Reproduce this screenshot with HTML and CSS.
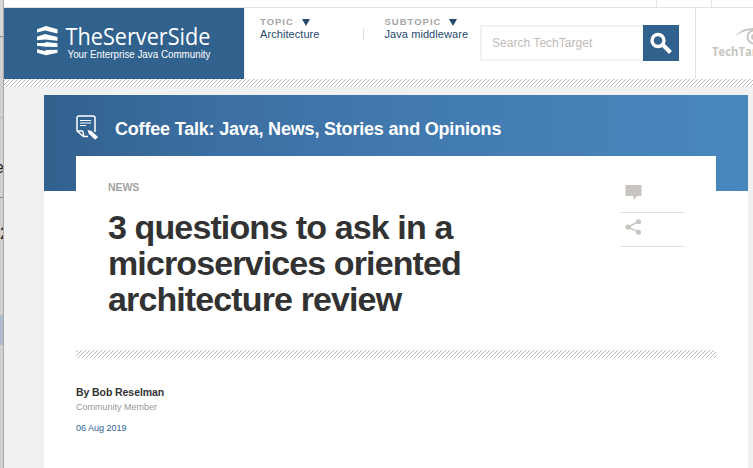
FILE: index.html
```html
<!DOCTYPE html>
<html lang="en">
<head>
<meta charset="utf-8">
<title>3 questions to ask in a microservices oriented architecture review</title>
<link rel="stylesheet" href="styles.css">
</head>
<body>
<aside class="edge">
  <div class="edge-head"></div>
  <div class="edge-row row-a"></div>
  <div class="edge-row row-b"></div>
  <div class="edge-row row-c"><span>e</span></div>
  <div class="edge-row row-d"><span>2</span></div>
  <div class="edge-selected"></div>
</aside>
<div class="page">
  <div class="topbar"><div class="topbar-cell"></div></div>
  <header class="header">
    <a class="brand">
      <svg width="240" height="71" viewBox="4 8 240 71">
        <g fill="#fff">
          <path d="M37 29.2l9-3.2 11.500 3.200v4.300L45 30.600l-8 1.900z"/>
          <path d="M37 36.700l8-2.700 12.500 3v3.700L45 39.600l-8 .6z"/>
          <path d="M37 43l8 0 .5-1 12 1.300v3.600L46 46.800l-9-1z"/>
          <path d="M37 49.200l8 1.800 1-1 11.500-.2v2.900L46 55.300l-9-2.600z"/>
        </g>
        <text class="brand-name" x="65.500" y="44.500" textLength="145" lengthAdjust="spacingAndGlyphs">TheServerSide</text>
        <text class="brand-tag" x="67.500" y="57.800" textLength="143" lengthAdjust="spacingAndGlyphs">Your Enterprise Java Community</text>
      </svg>
    </a>
    <nav class="topics">
      <div class="topic"><div class="topic-label">TOPIC<i class="caret"></i></div><a>Architecture</a></div>
      <div class="divider"></div>
      <div class="topic"><div class="topic-label">SUBTOPIC<i class="caret"></i></div><a>Java middleware</a></div>
    </nav>
    <form class="search">
      <div class="field">Search TechTarget</div>
      <div class="search-btn">
        <svg width="36" height="36" viewBox="0 0 36 36" fill="none" stroke="#fff"><circle cx="15" cy="15.500" r="6" stroke-width="3.400"/><path d="M19.500 19.500l8 8" stroke-width="4"/></svg>
      </div>
    </form>
    <div class="network">
      <svg width="57" height="71" viewBox="696 8 57 71">
        <path d="M736 36c3-5 9-8 18-8v2c-7 0-12 1.500-18 6z" fill="#c8c4c0"/>
        <circle cx="754" cy="37" r="6.500" fill="none" stroke="#c8c4c0" stroke-width="2"/>
        <circle cx="754" cy="37" r="3" fill="#c8c4c0"/>
        <text class="network-name" x="712" y="55.500" textLength="63" lengthAdjust="spacingAndGlyphs">TechTarget</text>
      </svg>
    </div>
  </header>
  <div class="hatch"></div>
  <main class="article">
    <div class="hero">
      <div class="channel">
        <svg width="24" height="26" viewBox="0 0 24 26" fill="none" stroke="#fff" stroke-width="1.500">
          <path d="M12 21.500H7.500L1 16V3Q1 1 3 1H17Q19 1 19 3V17"/>
          <path d="M1.500 16H6Q7.500 16 7.500 21"/>
          <path d="M4 5.500H15M4 8H15M4 10.500H10" stroke-width="1.200"/>
          <path d="M11.500 15l4 1 6.500 6-2.800 2.800-6.400-6z" fill="#fff" stroke="none"/>
        </svg>
        <span>Coffee Talk: Java, News, Stories and Opinions</span>
      </div>
    </div>
    <section class="card">
      <div class="card-main">
        <div class="headline">
          <div class="kicker">NEWS</div>
          <h1>3 questions to ask in a<br>microservices oriented<br>architecture review</h1>
        </div>
        <div class="actions">
          <a><svg width="17" height="16" viewBox="0 0 17 16"><path d="M.5 0h16v11h-4L8.500 15v-4h-8z" fill="#c8c4c0"/></svg></a>
          <a class="share"><svg width="17" height="16" viewBox="0 0 17 16" fill="#c8c4c0"><path d="M13.500 2.500L3 8l10.500 5.200" fill="none" stroke="#c8c4c0" stroke-width="1.500"/><circle cx="3" cy="8" r="2.600"/><circle cx="13.500" cy="2.700" r="2.500"/><circle cx="13.500" cy="13.200" r="2.500"/></svg></a>
        </div>
      </div>
      <div class="hatch"></div>
      <div class="byline">
        <div class="author">By Bob Reselman</div>
        <div class="role">Community Member</div>
        <div class="date">06 Aug 2019</div>
      </div>
    </section>
  </main>
</div>
</body>
</html>
```
FILE: styles.css
```css
* { box-sizing: border-box; }
body {
  margin: 0;
  height: 468px;
  display: flex;
  overflow: hidden;
  background: #f1f1f1;
  font-family: "Liberation Sans", Arial, sans-serif;
}
.edge {
  width: 4px;
  flex: none;
  overflow: hidden;
  background: #d0d0d0;
  border-right: 1px solid #a9a9a9;
  font-size: 16px;
  color: #222;
}
.edge-head { height: 37px; border-bottom: 1px solid #888; background: #d7d7d7; }
.edge-row { border-bottom: 1px solid #b9b9b9; }
.edge-row span { display: block; width: 10px; }
.row-a { height: 81px; }
.row-b { height: 19px; border-color: #c6c6c6; }
.row-c { height: 61px; padding-top: 22px; border-color: #888; }
.row-c span { margin-left: -5px; }
.row-d { height: 117px; padding-top: 27px; border: 0; }
.row-d span { margin-left: 0; }
.edge-selected { height: 30px; background: #aebbd0; }

.page { flex: 1; min-width: 0; display: flex; flex-direction: column; }
.topbar {
  height: 8px;
  flex: none;
  padding-left: 652px;
  background: #fff;
  border-bottom: 1px solid #e2e2e2;
}
.topbar-cell { width: 56px; height: 7px; border: solid #e2e2e2; border-width: 0 1px; }
.header { height: 71px; flex: none; display: flex; background: #fff; }
.brand { width: 240px; height: 71px; flex: none; background: #31618d; }
svg { display: block; }
.brand-name { font: 400 23px "Open Sans", sans-serif; fill: #fff; }
.brand-tag { font: 10px "Liberation Sans", Arial, sans-serif; fill: #fff; }
.topics {
  width: 236px;
  flex: none;
  display: flex;
  padding: 8px 0 0 16px;
  border-left: 1px solid #eee;
}
.topic {
  margin-left: -1px;
  font-size: 11px;
  line-height: 12px;
  letter-spacing: .07px;
  color: #264a6e;
  white-space: nowrap;
}
.topic-label {
  display: flex;
  align-items: center;
  height: 12px;
  font-size: 9.5px;
  font-weight: bold;
  letter-spacing: 1px;
  color: #a5a5a5;
}
.caret {
  margin-left: 8px;
  border: solid transparent;
  border-width: 7px 4.5px 0;
  border-top-color: #264a6e;
}
.divider { width: 1px; height: 12px; margin: 12px 22px 0 43px; background: #ddd; }
.search { width: 215px; flex: none; display: flex; padding-top: 17px; }
.field {
  width: 163px;
  height: 36px;
  padding-left: 10px;
  border: 2px solid #f1f1f1;
  border-right: 0;
  font-size: 12px;
  line-height: 32px;
  letter-spacing: .03px;
  color: #bfbbb8;
}
.search-btn { width: 36px; height: 36px; background: #31618d; }
.network { flex: 1; overflow: hidden; border-left: 1px solid #e2e2e2; }
.network-name { font: bold 13px "Open Sans", sans-serif; fill: #c8c4c0; }
.hatch {
  height: 8px;
  flex: none;
  background: repeating-linear-gradient(135deg, #fff 0 1.06px, #b8b8b8 1.06px 1.77px, #fff 1.77px 2.8284px);
}

.article { width: 704px; flex: 1; min-height: 0; margin: 8px 0 0 40px; background: #fff; }
.hero { height: 96px; background: linear-gradient(90deg, #31618d, #3c6fa2 25%, #4179ae 50%, #4a87bf); }
.channel {
  height: 61px;
  display: flex;
  align-items: center;
  padding: 5px 0 0 32px;
  font-size: 18px;
  font-weight: bold;
  color: #fff;
}
.channel span { margin: 2px 0 0 15px; letter-spacing: -.19px; }
.card { width: 640px; margin: -35px auto 0; background: #fff; }
.card-main { height: 194px; display: flex; justify-content: space-between; padding: 25px 31px 0 32px; }
.kicker { height: 28px; font-size: 10.5px; line-height: 13px; letter-spacing: -.1px; font-weight: bold; color: #a3a3a3; }
h1 { margin: 0; font-size: 34px; line-height: 36px; letter-spacing: -.88px; color: #323232; white-space: nowrap; }
.actions { width: 65px; }
.actions a { display: block; height: 32px; padding: 4px 0 0 5px; border-bottom: 1px solid #e2e2e2; }
.actions .share { height: 34px; padding-top: 6px; }
.byline { padding-top: 27px; font-size: 9px; white-space: nowrap; }
.author { font-size: 10.5px; line-height: 14px; letter-spacing: -.08px; font-weight: bold; color: #323232; }
.role { line-height: 16px; color: #999; }
.date { margin-top: 6px; line-height: 14px; color: #31618d; }
```
